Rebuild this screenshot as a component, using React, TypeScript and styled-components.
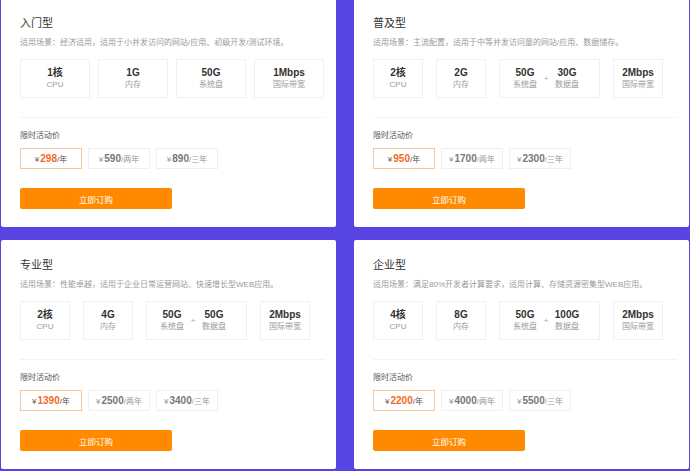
import { createGlobalStyle, styled } from 'styled-components';

const GlobalStyle = createGlobalStyle`
  html, body {
    margin: 0;
    padding: 0;
    background: #5843e3;
    overflow: hidden;
  }
  * {
    box-sizing: border-box;
  }
`;

const Grid = styled.div`
  display: grid;
  grid-template-columns: 335px 335px;
  column-gap: 18px;
  row-gap: 13px;
  margin-top: -2px;
  padding-left: 1px;
  font-family: "Liberation Sans", "Noto Sans CJK SC", sans-serif;
`;

const Card = styled.div`
  height: 229px;
  background: #fff;
  border-radius: 2px;
  padding: 18px 12px 18px 19px;
  display: flex;
  flex-direction: column;
`;

const Title = styled.div`
  font-size: 11px;
  line-height: 14px;
  color: #333;
`;

const Desc = styled.div`
  margin-top: 7px;
  font-size: 8px;
  line-height: 12px;
  color: #9a9a9a;
  white-space: nowrap;
`;

const SpecRow = styled.div<{ $gap: number }>`
  margin-top: 10px;
  display: flex;
  gap: ${({ $gap }) => $gap}px;
  padding-bottom: 19px;
  border-bottom: 1px solid #f3f3f3;
`;

const SpecBox = styled.div<{ $width: number }>`
  width: ${({ $width }) => $width}px;
  height: 39px;
  border: 1px solid #f1f1f1;
  display: flex;
  align-items: center;
  justify-content: center;
`;

const DoubleBox = styled(SpecBox)`
  justify-content: flex-start;
  padding-left: 9px;
`;

const SpecItem = styled.div<{ $width?: number }>`
  width: ${({ $width }) => ($width ? `${$width}px` : 'auto')};
  display: flex;
  flex-direction: column;
  align-items: center;
`;

const Value = styled.div`
  font-size: 10px;
  line-height: 12px;
  font-weight: bold;
  color: #333;
`;

const Label = styled.div`
  font-size: 8px;
  line-height: 11px;
  color: #9a9a9a;
`;

const Plus = styled.div`
  width: 10px;
  text-align: center;
  font-size: 8px;
  color: #aaa;
`;

const PriceTitle = styled.div`
  margin-top: 12px;
  font-size: 8px;
  line-height: 12px;
  color: #555;
`;

const PriceRow = styled.div`
  margin-top: 6px;
  display: flex;
  gap: 6px;
`;

const PriceBox = styled.div<{ $active: boolean }>`
  width: 62px;
  height: 21px;
  border: 1px solid ${({ $active }) => ($active ? '#f4c896' : '#f0f0f0')};
  display: flex;
  align-items: baseline;
  justify-content: center;
  padding-top: 4px;
  white-space: nowrap;
`;

const Yen = styled.span<{ $active: boolean }>`
  font-size: 8px;
  color: ${({ $active }) => ($active ? '#666' : '#999')};
  margin-right: 1px;
`;

const Amount = styled.span<{ $active: boolean }>`
  font-size: 10px;
  font-weight: bold;
  color: ${({ $active }) => ($active ? '#f4691c' : '#777')};
`;

const Period = styled.span<{ $active: boolean }>`
  font-size: 8px;
  color: ${({ $active }) => ($active ? '#555' : '#999')};
`;

const BuyButton = styled.button`
  margin-top: 19px;
  width: 152px;
  height: 22px;
  border: none;
  border-radius: 2px;
  background: #ff8a00;
  color: #fff;
  font-family: inherit;
  font-size: 8.5px;
  padding: 0;
  cursor: pointer;
`;

type Spec = { value: string; label: string; extra?: { value: string; label: string } };

type Plan = {
  title: string;
  desc: string;
  specs: Spec[];
  prices: string[];
  wide?: boolean;
};

const periods = ['/年', '/两年', '/三年'];

const plans: Plan[] = [
  {
    title: '入门型',
    desc: '适用场景：经济适用，适用于小并发访问的网站/应用、初级开发/测试环境。',
    specs: [
      { value: '1核', label: 'CPU' },
      { value: '1G', label: '内存' },
      { value: '50G', label: '系统盘' },
      { value: '1Mbps', label: '国际带宽' },
    ],
    prices: ['298', '590', '890'],
    wide: true,
  },
  {
    title: '普及型',
    desc: '适用场景：主流配置，适用于中等并发访问量的网站/应用、数据储存。',
    specs: [
      { value: '2核', label: 'CPU' },
      { value: '2G', label: '内存' },
      { value: '50G', label: '系统盘', extra: { value: '30G', label: '数据盘' } },
      { value: '2Mbps', label: '国际带宽' },
    ],
    prices: ['950', '1700', '2300'],
  },
  {
    title: '专业型',
    desc: '适用场景：性能卓越，适用于企业日常运营网站、快速增长型WEB应用。',
    specs: [
      { value: '2核', label: 'CPU' },
      { value: '4G', label: '内存' },
      { value: '50G', label: '系统盘', extra: { value: '50G', label: '数据盘' } },
      { value: '2Mbps', label: '国际带宽' },
    ],
    prices: ['1390', '2500', '3400'],
  },
  {
    title: '企业型',
    desc: '适用场景：满足80%开发者计算要求，适用计算、存储资源密集型WEB应用。',
    specs: [
      { value: '4核', label: 'CPU' },
      { value: '8G', label: '内存' },
      { value: '50G', label: '系统盘', extra: { value: '100G', label: '数据盘' } },
      { value: '2Mbps', label: '国际带宽' },
    ],
    prices: ['2200', '4000', '5500'],
  },
];

const PlanCard = ({ plan }: { plan: Plan }) => (
  <Card>
    <Title>{plan.title}</Title>
    <Desc>{plan.desc}</Desc>
    <SpecRow $gap={plan.wide ? 8 : 13}>
      {plan.specs.map((spec) =>
        spec.extra ? (
          <DoubleBox key={spec.label} $width={101}>
            <SpecItem $width={32}>
              <Value>{spec.value}</Value>
              <Label>{spec.label}</Label>
            </SpecItem>
            <Plus>+</Plus>
            <SpecItem $width={32}>
              <Value>{spec.extra.value}</Value>
              <Label>{spec.extra.label}</Label>
            </SpecItem>
          </DoubleBox>
        ) : (
          <SpecBox key={spec.label} $width={plan.wide ? 70 : 50}>
            <SpecItem>
              <Value>{spec.value}</Value>
              <Label>{spec.label}</Label>
            </SpecItem>
          </SpecBox>
        )
      )}
    </SpecRow>
    <PriceTitle>限时活动价</PriceTitle>
    <PriceRow>
      {plan.prices.map((price, i) => {
        const active = i === 0;
        return (
          <PriceBox key={price} $active={active}>
            <Yen $active={active}>¥</Yen>
            <Amount $active={active}>{price}</Amount>
            <Period $active={active}>{periods[i]}</Period>
          </PriceBox>
        );
      })}
    </PriceRow>
    <BuyButton>立即订购</BuyButton>
  </Card>
);

export default function App() {
  return (
    <>
      <GlobalStyle />
      <Grid>
        {plans.map((plan) => (
          <PlanCard key={plan.title} plan={plan} />
        ))}
      </Grid>
    </>
  );
}
